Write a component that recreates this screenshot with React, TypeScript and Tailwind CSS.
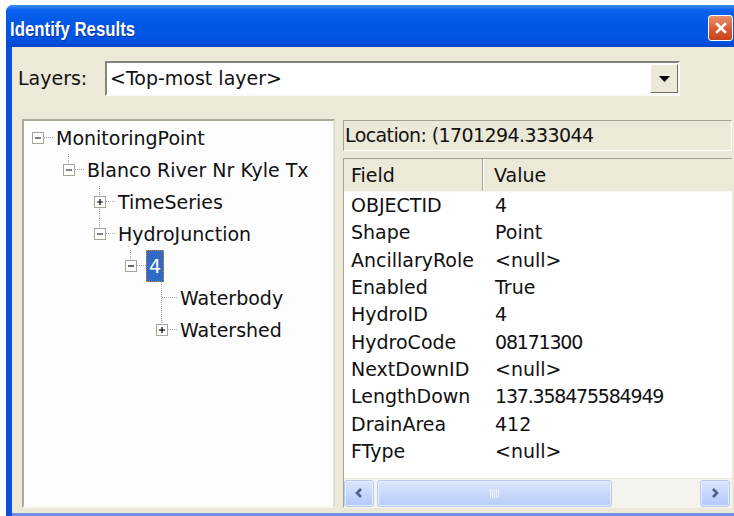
import React from "react";

type TreeNode = {
  label: string;
  level: number;
  box?: "plus" | "minus";
  above: boolean;
  below: boolean;
  selected?: boolean;
};

const tree: TreeNode[] = [
  { label: "MonitoringPoint", level: 0, box: "minus", above: false, below: false },
  { label: "Blanco River Nr Kyle Tx", level: 1, box: "minus", above: true, below: false },
  { label: "TimeSeries", level: 2, box: "plus", above: true, below: true },
  { label: "HydroJunction", level: 2, box: "minus", above: true, below: false },
  { label: "4", level: 3, box: "minus", above: true, below: false, selected: true },
  { label: "Waterbody", level: 4, above: true, below: true },
  { label: "Watershed", level: 4, box: "plus", above: true, below: false },
];

const indent = ["w-0", "w-[31px]", "w-[62px]", "w-[93px]", "w-[124px]"];

const fields: [string, string, boolean?][] = [
  ["OBJECTID", "4"],
  ["Shape", "Point"],
  ["AncillaryRole", "<null>"],
  ["Enabled", "True"],
  ["HydroID", "4"],
  ["HydroCode", "08171300", true],
  ["NextDownID", "<null>"],
  ["LengthDown", "137.358475584949", true],
  ["DrainArea", "412"],
  ["FType", "<null>"],
];

function Connector({ node }: { node: TreeNode }) {
  const hasBox = !!node.box;
  const dot = { stroke: "#A3A3A3", strokeWidth: 1, strokeDasharray: "1 1" };
  return (
    <svg width="29" height="32" viewBox="0 0 29 32" className="shrink-0">
      {node.above && <line x1="13.5" y1="0" x2="13.5" y2={hasBox ? 10 : 16} {...dot} />}
      {node.below && <line x1="13.5" y1={hasBox ? 21 : 16} x2="13.5" y2="32" {...dot} />}
      <line x1={hasBox ? 20 : 14} y1="15.5" x2="29" y2="15.5" {...dot} />
      {hasBox && (
        <g>
          <rect x="8.5" y="10.5" width="11" height="11" fill="#FFFFFF" stroke="#A8A596" />
          <line x1="11" y1="16" x2="17" y2="16" stroke="#000" strokeWidth="1.2" />
          {node.box === "plus" && <line x1="14" y1="13" x2="14" y2="19" stroke="#000" strokeWidth="1.2" />}
        </g>
      )}
    </svg>
  );
}

function TreeRow({ node }: { node: TreeNode }) {
  return (
    <div className="h-[32px] flex items-center">
      <div className={`${indent[node.level]} shrink-0`} />
      <Connector node={node} />
      {node.selected ? (
        <span className="h-[32px] flex items-center px-[3px] bg-[#316AC5] text-white outline outline-1 outline-dotted outline-offset-[-1px] outline-[#C98A2E]">
          {node.label}
        </span>
      ) : (
        <span className="pl-[3px] whitespace-nowrap">{node.label}</span>
      )}
    </div>
  );
}

function ScrollButton({ dir }: { dir: "left" | "right" }) {
  return (
    <div className="w-[30px] h-[27px] shrink-0 rounded-[3px] border border-[#B5C8F3] bg-[linear-gradient(to_bottom,#DCE6FD,#C3D4FB_60%,#B4C9F8)] flex items-center justify-center shadow-[inset_0_0_0_1px_#E9EFFD]">
      <svg width="12" height="14" viewBox="0 0 12 14">
        {dir === "left" ? (
          <path d="M8 3 L4 7 L8 11" fill="none" stroke="#4D6185" strokeWidth="2.6" />
        ) : (
          <path d="M4 3 L8 7 L4 11" fill="none" stroke="#4D6185" strokeWidth="2.6" />
        )}
      </svg>
    </div>
  );
}

export default function App() {
  return (
    <div className="w-[734px] h-[516px] bg-white overflow-hidden font-['DejaVu_Sans',sans-serif] text-[#111] text-[19px] leading-none">
      <div className="mt-[5px] ml-[6px] h-[511px] flex flex-col rounded-tl-[7px] bg-[#0A4FDE] overflow-hidden">
        {/* title bar */}
        <div className="h-[42px] shrink-0 flex justify-between pl-[4px] bg-[linear-gradient(to_bottom,#3D8FF6_0%,#0A62EE_12%,#0057E6_45%,#0053E1_85%,#0046CC_100%)]">
          <span className="self-center mt-[5px] inline-block origin-left scale-x-[0.8] text-white font-bold text-[21px] whitespace-nowrap font-['Liberation_Sans',sans-serif] [text-shadow:1px_1px_0_#0B2E9A]">
            Identify Results
          </span>
          <div className="mt-[10px] mr-[1px] w-[25px] h-[26px] rounded-[3px] border border-white bg-[linear-gradient(to_bottom,#E9906B,#D9592F_55%,#C4441C)] flex items-center justify-center">
            <svg width="12" height="12" viewBox="0 0 12 12">
              <path d="M2 2 L10 10 M10 2 L2 10" stroke="#FFFFFF" strokeWidth="2.6" strokeLinecap="square" />
            </svg>
          </div>
        </div>

        {/* dialog body */}
        <div className="flex-1 flex flex-col ml-[6px] bg-[#ECE9D8] min-h-0">
          <div className="flex items-center pt-[14px]">
            <span className="w-[93px] pl-[6px] shrink-0">Layers:</span>
            <div className="w-[575px] h-[35px] flex items-stretch border-2 border-t-[#85837A] border-l-[#85837A] border-b-[#FBFAF6] border-r-[#FBFAF6] bg-white">
              <span className="flex-1 flex items-center pl-[3px]">&lt;Top-most layer&gt;</span>
              <div className="w-[28px] my-[1px] flex items-center justify-center bg-[#ECE9D8] border border-t-white border-l-white border-b-[#716F64] border-r-[#716F64]">
                <svg width="11" height="6" viewBox="0 0 11 6">
                  <path d="M0 0 H11 L5.5 6 Z" fill="#000" />
                </svg>
              </div>
            </div>
          </div>

          <div className="flex-1 flex gap-[8px] pl-[10px] pr-[2px] mt-[23px] pb-[5px] min-h-0">
            {/* tree */}
            <div className="w-[313px] shrink-0 bg-[#FDFDFD] border-2 border-t-[#ACA899] border-l-[#ACA899] border-b-[#F7F6F0] border-r-[#E2DFD2] pt-[1px]">
              {tree.map((n) => (
                <TreeRow key={n.label} node={n} />
              ))}
            </div>

            {/* attribute panel */}
            <div className="flex-1 flex flex-col pt-[1px] min-w-0">
              <div className="h-[31px] shrink-0 flex items-center pl-[1px] border border-t-[#A4A194] border-l-[#A4A194] border-b-white border-r-white tracking-[-0.6px] whitespace-nowrap">
                Location: (1701294.333044
              </div>
              <div className="mt-[7px] flex-1 flex flex-col bg-white border-l border-t border-b border-l-[#A4A194] border-t-[#A4A194] border-b-[#F4F3EE]">
                <div className="h-[33px] shrink-0 flex bg-[#ECE9D8] border-b border-b-[#F8F7F1]">
                  <div className="w-[139px] flex items-center pl-[7px] border-r border-r-[#A8A597]">Field</div>
                  <div className="flex-1 flex items-center pl-[10px] border-l border-l-white">Value</div>
                </div>
                {fields.map(([f, v, num]) => (
                  <div key={f} className="h-[27.3px] shrink-0 flex items-center whitespace-nowrap">
                    <span className="w-[141px] pl-[7px]">{f}</span>
                    <span className={`pl-[10px] ${num ? "tracking-[-1.2px]" : ""}`}>{v}</span>
                  </div>
                ))}
                <div className="mt-auto h-[29px] shrink-0 flex items-center gap-[3px] pr-[2px] bg-[#F5F4EF] border-t border-t-[#ECEBE3]">
                  <ScrollButton dir="left" />
                  <div className="w-[235px] h-[27px] rounded-[3px] border border-[#B5C8F3] bg-[linear-gradient(to_bottom,#DCE6FD,#C6D6FB_60%,#B8CCF9)] shadow-[inset_0_0_0_1px_#E9EFFD] flex items-center justify-center gap-[1px]">
                    {[0, 1, 2, 3, 4].map((i) => (
                      <div key={i} className="w-[1px] h-[9px] bg-[#EEF3FE]" />
                    ))}
                  </div>
                  <div className="flex-1" />
                  <ScrollButton dir="right" />
                </div>
              </div>
            </div>
          </div>
        </div>
        <div className="h-[3px] shrink-0 ml-[6px] bg-[#6F90E6]" />
      </div>
    </div>
  );
}
